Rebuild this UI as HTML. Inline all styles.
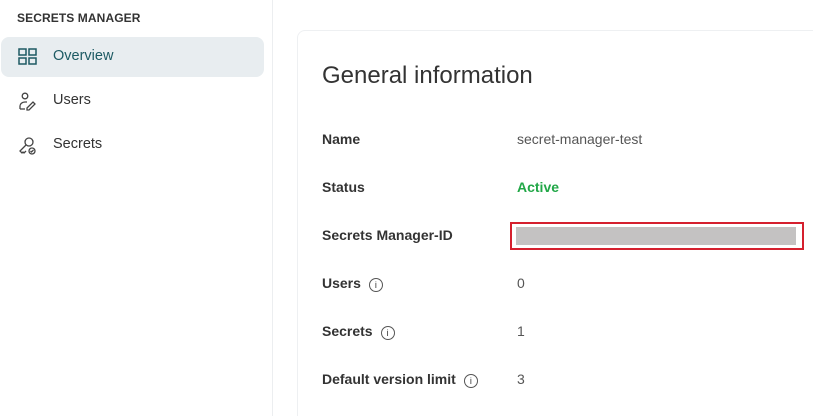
<!DOCTYPE html>
<html><head><style>
html,body{margin:0;width:813px;height:416px;overflow:hidden}
body{background:#fff;font-family:"Liberation Sans",sans-serif;position:relative;color:#333}
.side{position:absolute;left:0;top:0;width:272px;height:416px;border-right:1px solid #eceef0}
.hd{position:absolute;left:17px;top:11px;font-size:12px;font-weight:bold;color:#333;letter-spacing:.1px}
.item{position:absolute;left:1px;width:263px;height:40px;border-radius:8px;font-size:14.5px}
.item span{position:absolute;left:52px;top:11px}
.item svg{position:absolute;left:17px;top:11px}
.card{position:absolute;left:297px;top:30px;width:540px;height:400px;border:1px solid #eef0f2;border-radius:8px}
h1{position:absolute;left:322px;top:62px;margin:0;font-size:24px;font-weight:normal;color:#333}
.l{position:absolute;left:322px;font-size:14px;font-weight:bold;color:#333}
.v{position:absolute;left:517px;font-size:14px;color:#555}
.i{display:inline-block;width:12px;height:12px;border:1.2px solid #555;border-radius:50%;font-size:9px;text-align:center;line-height:12px;margin-left:8px;vertical-align:0px;font-weight:normal}
</style></head><body>
<div class="side">
<div class="hd">SECRETS MANAGER</div>
<div class="item" style="top:37px;background:#e8edf0;color:#1d5a63"><svg width="20" height="18" viewBox="0 0 20 18" fill="none" stroke="#1d5a63" stroke-width="1.5"><rect x="1" y="1" width="7" height="6"/><rect x="11" y="1" width="7" height="6"/><rect x="1" y="10" width="7" height="6"/><rect x="11" y="10" width="7" height="6"/></svg><span>Overview</span></div>
<div class="item" style="top:81px"><svg width="20" height="20" viewBox="0 0 20 20" fill="none" stroke="#444" stroke-width="1.3"><circle cx="7" cy="4" r="2.8"/><path d="M2 17v-3c0-2 2-4 5-4h2"/><path d="M2 17h5"/><path d="M9 16l6-6 2 2-6 6h-2z"/></svg><span>Users</span></div>
<div class="item" style="top:125px"><svg width="20" height="20" viewBox="0 0 20 20" fill="none" stroke="#444" stroke-width="1.3"><circle cx="11" cy="6" r="4"/><path d="M8 9l-6 6 2 2 1-1 1 1 2-2"/><circle cx="14" cy="15" r="3"/><path d="M12.5 15l1 1 2-2"/></svg><span>Secrets</span></div>
</div>
<div class="card"></div>
<h1>General information</h1>
<div class="l" style="top:131px">Name</div><div class="v" style="top:131px">secret-manager-test</div>
<div class="l" style="top:179px">Status</div><div class="v" style="top:179px;color:#21a747;font-weight:bold">Active</div>
<div class="l" style="top:227px">Secrets Manager-ID</div>
<div style="position:absolute;left:510px;top:222px;width:290px;height:24px;border:2px solid #d5202e"></div>
<div style="position:absolute;left:516px;top:227px;width:280px;height:18px;background:#c4c2c2"></div>
<div class="l" style="top:275px">Users<span class="i">i</span></div><div class="v" style="top:275px">0</div>
<div class="l" style="top:323px">Secrets<span class="i">i</span></div><div class="v" style="top:323px">1</div>
<div class="l" style="top:371px">Default version limit<span class="i">i</span></div><div class="v" style="top:371px">3</div>
</body></html>
